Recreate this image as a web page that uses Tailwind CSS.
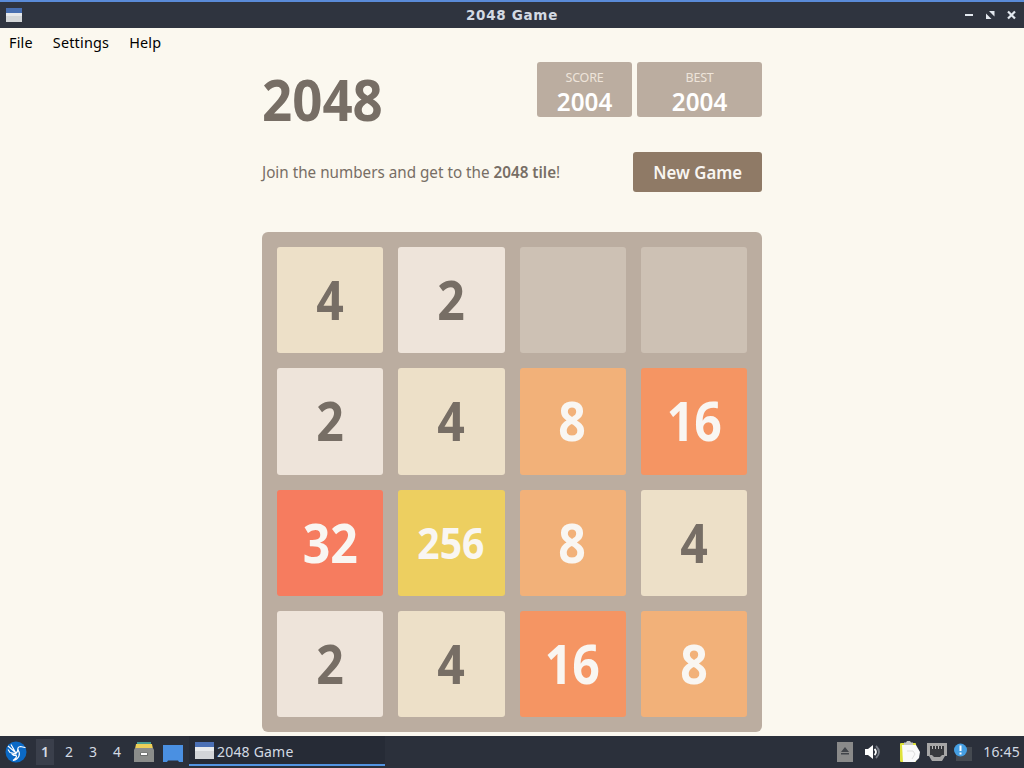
<!DOCTYPE html>
<html lang="en">
<head>
    <meta charset="UTF-8">
    <meta name="viewport" content="width=device-width, initial-scale=1.0">
    <title>2048 Game</title>
    <script src="https://cdn.jsdelivr.net/npm/@tailwindcss/browser@4"></script>
</head>
<body class="flex flex-col w-[1024px] h-[768px] overflow-hidden bg-[#fbf8ef] font-['Noto_Sans',sans-serif]">

<!-- Window title bar -->
<header class="grid grid-cols-[1fr_auto_1fr] items-center h-7 shrink-0 bg-[#2f343f] border-t-2 border-[#5a8bd8] px-1.5">
    <svg class="w-4 h-4" viewBox="0 0 16 16">
        <rect y="1" width="16" height="14" fill="#d3d6d8"/>
        <rect y="1" width="16" height="5" fill="#476eb0"/>
        <rect y="6" width="16" height="3" fill="#e6e8ea"/>
    </svg>
    <h1 class="text-[13.5px] font-bold tracking-[0.7px] text-[#d3dae3] font-['DejaVu_Sans',sans-serif]">2048 Game</h1>
    <div class="flex justify-end gap-3 pr-0.5">
        <svg class="w-[9px] h-[10px]" viewBox="0 0 9 10"><path d="M0 5h8" stroke="#e3e8ef" stroke-width="2"/></svg>
        <svg class="w-[9px] h-[10px]" viewBox="0 0 9 10"><path d="M3 1h5.500v5.500zM0 3.500v5.500h5.500z" fill="#e3e8ef"/></svg>
        <svg class="w-[9px] h-[10px]" viewBox="0 0 9 10"><path d="M1 1.500l7 7M8 1.500l-7 7" stroke="#e3e8ef" stroke-width="2.200"/></svg>
    </div>
</header>

<!-- Menu bar -->
<nav class="flex items-center gap-5 h-[30px] shrink-0 pl-[9px] text-[14.4px] tracking-[0.2px] text-black">
    <span>File</span>
    <span>Settings</span>
    <span>Help</span>
</nav>

<!-- Game -->
<main class="flex flex-col w-[500px] mx-auto pt-1 grow text-[#776e65]">
    <div class="flex justify-between h-[90px]">
        <h2 class="text-[58px] leading-[73px] font-bold origin-left scale-x-[0.91]">2048</h2>
        <div class="flex gap-[5px]">
            <div class="flex flex-col items-center w-[95px] h-[55px] pt-2 rounded-[3px] bg-[#bbada0]">
                <span class="text-[12.5px] leading-[15px] tracking-[-0.2px] text-[#eee4da]">SCORE</span>
                <span class="text-[25px] leading-[33px] font-semibold scale-x-[0.97] text-white">2004</span>
            </div>
            <div class="flex flex-col items-center w-[125px] h-[55px] pt-2 rounded-[3px] bg-[#bbada0]">
                <span class="text-[12.5px] leading-[15px] tracking-[-0.2px] text-[#eee4da]">BEST</span>
                <span class="text-[25px] leading-[33px] font-semibold scale-x-[0.97] text-white">2004</span>
            </div>
        </div>
    </div>

    <div class="flex items-center justify-between h-10">
        <p class="text-base whitespace-nowrap origin-left scale-x-[0.952]">Join the numbers and get to the <strong class="font-semibold">2048 tile</strong>!</p>
        <button class="flex items-center justify-center w-[129px] h-10 rounded-[3px] bg-[#8f7a66] text-lg font-semibold text-[#f9f6f2]">
            <span class="scale-x-[0.93]">New Game</span>
        </button>
    </div>

    <div class="grid grid-cols-4 auto-rows-[106.25px] gap-[15px] h-[500px] shrink-0 mt-10 p-[15px] rounded-md bg-[#bbada0] text-[53px] font-bold leading-none *:flex *:items-center *:justify-center *:pb-px *:rounded-[3px] [&_span]:scale-x-[0.91]">
        <div class="bg-[#ede0c8]"><span>4</span></div>
        <div class="bg-[#eee4da]"><span>2</span></div>
        <div class="bg-[#cdc1b4]"></div>
        <div class="bg-[#cdc1b4]"></div>

        <div class="bg-[#eee4da]"><span>2</span></div>
        <div class="bg-[#ede0c8]"><span>4</span></div>
        <div class="bg-[#f2b179] text-[#f9f6f2]"><span>8</span></div>
        <div class="bg-[#f59563] text-[#f9f6f2]"><span>16</span></div>

        <div class="bg-[#f67c5f] text-[#f9f6f2]"><span>32</span></div>
        <div class="bg-[#edcf60] text-[43px] text-[#f9f6f2]"><span>256</span></div>
        <div class="bg-[#f2b179] text-[#f9f6f2]"><span>8</span></div>
        <div class="bg-[#ede0c8]"><span>4</span></div>

        <div class="bg-[#eee4da]"><span>2</span></div>
        <div class="bg-[#ede0c8]"><span>4</span></div>
        <div class="bg-[#f59563] text-[#f9f6f2]"><span>16</span></div>
        <div class="bg-[#f2b179] text-[#f9f6f2]"><span>8</span></div>
    </div>
</main>

<!-- Taskbar -->
<footer class="flex items-center h-8 shrink-0 bg-[#2b303b] text-sm text-[#d3dae3]">
    <svg class="w-[22px] h-[22px] ml-[5px]" viewBox="0 0 22 22">
        <circle cx="11" cy="11" r="10.500" fill="#0b69c5"/>
        <path d="M20 6.500l-4.500-1c-2.500 0-3 2-2.500 4" fill="none" stroke="#fff" stroke-width="1.200" stroke-linecap="round"/>
        <path d="M3 5l7.500 6.500L6 3.500M3 8.500l2 3 5 1" fill="none" stroke="#fff" stroke-width="1.200" stroke-linejoin="round"/>
        <path d="M13 9c3 4 1 9-5 10.500 3-2 4-4 3-5.500-1.500 1-3 .5-4-1 3 .5 5-1 6-4z" fill="none" stroke="#fff" stroke-width="1.200"/>
    </svg>
    <div class="flex ml-[9px] text-center">
        <span class="w-[18px] h-[26px] leading-[26px] mr-[3px] bg-[#3a3f4b] font-semibold">1</span>
        <span class="w-6 leading-[26px]">2</span>
        <span class="w-6 leading-[26px]">3</span>
        <span class="w-6 leading-[26px]">4</span>
    </div>
    <svg class="w-5 h-5 ml-[5px]" viewBox="0 0 20 20">
        <path d="M3 0h14v4H3z" fill="#4a9d91"/>
        <path d="M2 2h16l1 5H1z" fill="#edcf58"/>
        <path d="M1 6h18l1 2v12H0V8z" fill="#8b8d8b"/>
        <rect x="6" y="10.500" width="8" height="3.500" rx="1" fill="#6b6e6d"/>
        <path d="M7 12h6" stroke="#fff" stroke-width="2"/>
    </svg>
    <svg class="w-5 h-[17px] ml-[9px] mt-[2px]" viewBox="0 0 20 17">
        <path d="M0 0h20v17h-4l-1-1.500H5L4 17H0z" fill="#4a90e2"/>
    </svg>
    <div class="flex items-center w-[196px] h-[30px] ml-[6px] self-start border-b-2 border-[#5294e2] pl-[6px] gap-[3px] bg-[#262b36]">
        <svg class="w-[19px] h-[17px]" viewBox="0 0 19 17">
            <rect width="19" height="17" fill="#d3d5d8"/>
            <rect width="19" height="5" fill="#4b70b5"/>
            <rect y="5" width="19" height="4" fill="#e8eaec"/>
        </svg>
        <span class="pt-[3px] tracking-[0.2px]">2048 Game</span>
    </div>

    <!-- System tray -->
    <div class="flex items-center ml-auto pr-1">
        <svg class="w-4 h-5 mr-[12px]" viewBox="0 0 16 20">
            <rect width="16" height="20" fill="#8a8a8a"/>
            <path d="M8 5l4 5H4zM4 11h8v1.500H4z" fill="#41444a"/>
        </svg>
        <svg class="w-4 h-4 mr-[19px]" viewBox="0 0 16 16">
            <path d="M0 5h3l5-4v14l-5-4H0z" fill="#fff"/>
            <path d="M9.500 5q3 3 0 6" fill="none" stroke="#fff" stroke-width="1.800"/>
            <path d="M11 2q6 6 0 12" fill="none" stroke="#777c86" stroke-width="1.800"/>
        </svg>
        <svg class="w-5 h-[22px] mr-[7px]" viewBox="0 0 20 22">
            <rect y="2" width="16" height="19" rx="1" fill="#dfe23a"/>
            <path d="M2 4h14l4 7-1 6-4 4H3z" fill="#fafafa"/>
            <path d="M4 3V1.500h2L7 0h3l1 1.500h2V4H4z" fill="#c9c9c5"/>
            <path d="M7 10h6l2 3-3 5" fill="none" stroke="#dedede"/>
        </svg>
        <svg class="w-5 h-[18px] mr-[7px]" viewBox="0 0 20 18">
            <path d="M0 0h20v13h-2l-3 5H5l-3-5H0z" fill="#a6a6a6"/>
            <path d="M3 3h14v9h-2l-2 2H7l-2-2H3z" fill="#37393d"/>
            <path d="M5.500 3v3M8.500 3v3M11.500 3v3M14.500 3v3" stroke="#bbb"/>
        </svg>
        <svg class="w-[19px] h-[19px] mr-[10px]" viewBox="0 0 19 19">
            <rect x="2" y="4" width="16" height="14" fill="#454a51"/>
            <circle cx="6.500" cy="7" r="6.500" fill="#459fe3"/>
            <path d="M6.500 2.500v5.500M6.500 9.500v2" stroke="#fff" stroke-width="2"/>
        </svg>
        <span class="tracking-[0.2px]">16:45</span>
    </div>
</footer>

</body>
</html>
